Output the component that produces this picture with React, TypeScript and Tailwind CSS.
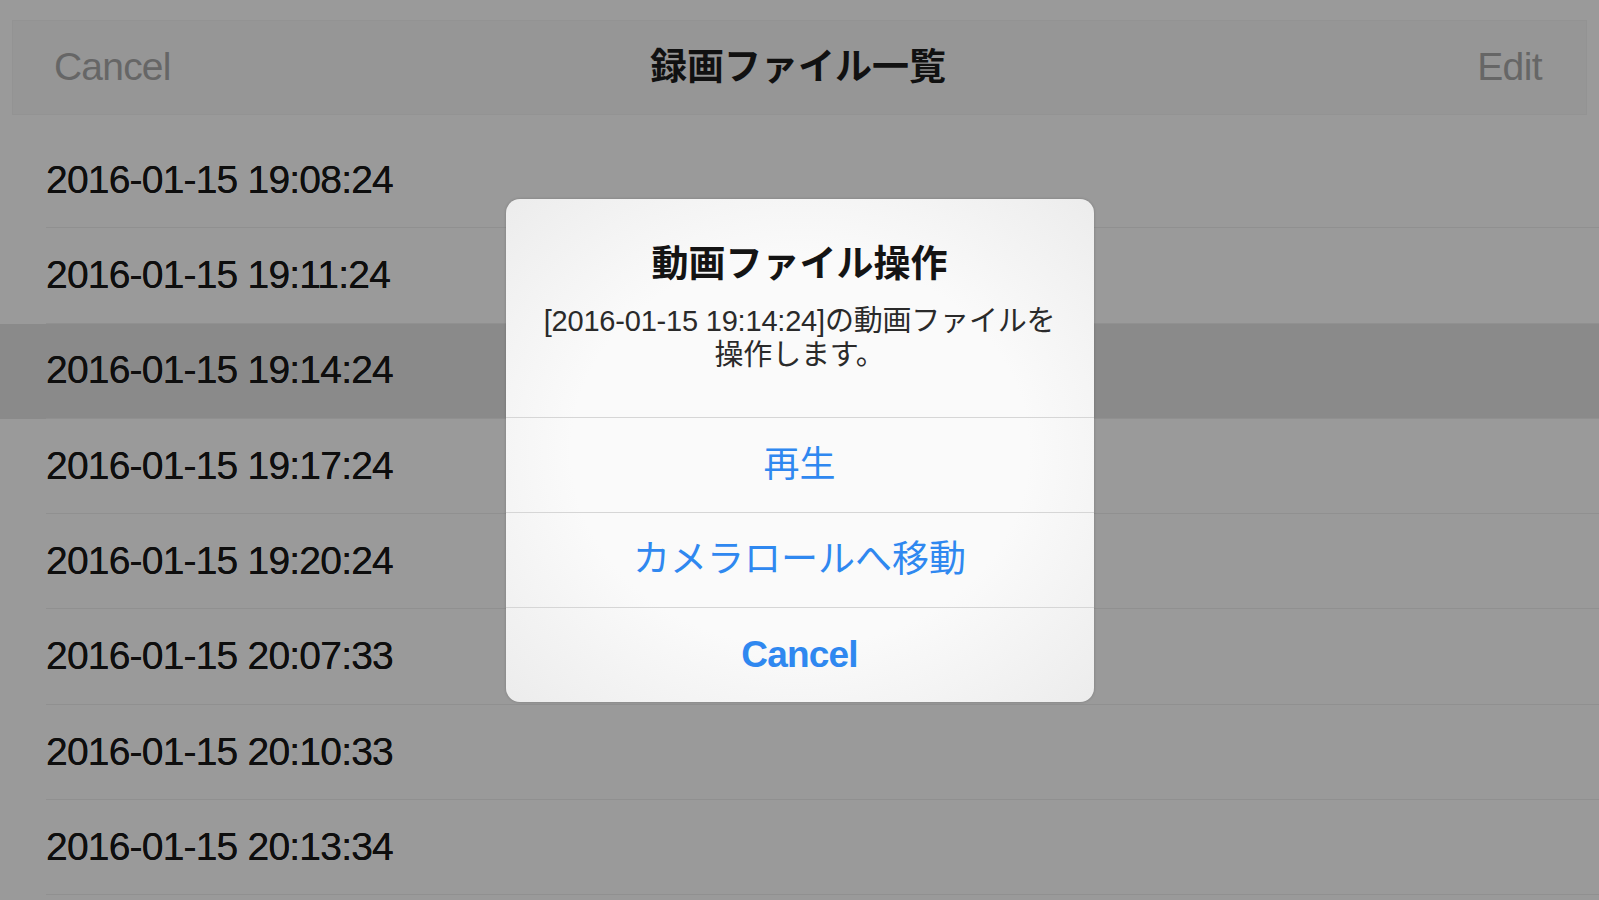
const files = [
  "2016-01-15 19:08:24",
  "2016-01-15 19:11:24",
  "2016-01-15 19:14:24",
  "2016-01-15 19:17:24",
  "2016-01-15 19:20:24",
  "2016-01-15 20:07:33",
  "2016-01-15 20:10:33",
  "2016-01-15 20:13:34",
];

const selected = "2016-01-15 19:14:24";

export default function App() {
  return (
    <div className="relative h-[900px] w-[1599px] overflow-hidden bg-[#9a9a9a] font-['Liberation_Sans','Noto_Sans_CJK_JP',sans-serif] text-[#0e0e0e]">
      {/* navigation bar */}
      <div className="px-[12px] pt-[20px]">
        <div className="flex h-[95px] items-center justify-between border border-[#939393] bg-[#969696] pl-[41px] pr-[44px]">
          <span className="w-[200px] text-[39px] tracking-[-0.8px] text-[#666666]">Cancel</span>
          <span className="text-[37px] font-bold text-[#111111]">録画ファイル一覧</span>
          <span className="w-[200px] text-right text-[39px] tracking-[-0.6px] text-[#666666]">Edit</span>
        </div>
      </div>

      {/* file list */}
      <div className="mt-[18px]">
        {files.map((f) => (
          <div key={f} className={f === selected ? "h-[95.3px] bg-[#8a8a8a]" : "h-[95.3px]"}>
            <div className="ml-[46px] flex h-full items-center border-b border-[#909090]">
              <span className="text-[39px] tracking-[-0.8px] [text-shadow:0_0_0.6px_#0e0e0e]">{f}</span>
            </div>
          </div>
        ))}
      </div>

      {/* action alert */}
      <div className="absolute inset-0 flex items-center justify-center">
        <div className="w-[588px] overflow-hidden rounded-[14px] bg-[radial-gradient(ellipse_at_center,#fafafa_55%,#ececec_100%)] shadow-[0_0_3px_rgba(0,0,0,0.2)]">
          <div className="flex h-[218px] flex-col items-center pt-[44px] text-center">
            <div className="text-[37px] font-bold leading-[44px] text-[#141414]">動画ファイル操作</div>
            <div className="mt-[17px] text-[29px] leading-[34px] tracking-[-0.2px] text-[#2a2a2a]">
              [2016-01-15 19:14:24]の動画ファイルを
              <br />
              操作します。
            </div>
          </div>
          <div className="flex h-[95px] items-center justify-center border-t border-[#d6d6d6] text-[36px] text-[#2f88f0]">
            再生
          </div>
          <div className="flex h-[95px] items-center justify-center border-t border-[#d6d6d6] text-[37px] text-[#2f88f0]">
            カメラロールへ移動
          </div>
          <div className="flex h-[95px] items-center justify-center border-t border-[#d6d6d6] text-[37px] font-bold tracking-[-0.8px] text-[#2f88f0]">
            Cancel
          </div>
        </div>
      </div>
    </div>
  );
}
